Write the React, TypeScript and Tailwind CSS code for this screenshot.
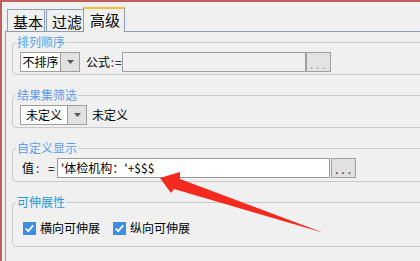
import React from "react";

function Group({
  title,
  color,
  className,
  children,
}: {
  title: string;
  color: string;
  className: string;
  children: React.ReactNode;
}) {
  return (
    <div className={`relative w-[420px] shrink-0 rounded-[4px] border border-[#c9c9c9] ${className}`}>
      <span className={`absolute left-[3px] -top-[8px] bg-[#f0f0f0] px-[1px] text-[12px] leading-[14px] ${color}`}>
        {title}
      </span>
      {children}
    </div>
  );
}

function Triangle() {
  return (
    <svg width="7" height="4" viewBox="0 0 7 4">
      <polygon points="0,0 7,0 3.5,4" fill="#555555" />
    </svg>
  );
}

function Check() {
  return (
    <div className="flex h-[13px] w-[13px] items-center justify-center bg-[#3c8ee5]">
      <svg width="13" height="13" viewBox="0 0 13 13">
        <polyline points="2.8,6.6 5.3,9.2 10.2,3.4" fill="none" stroke="#ffffff" strokeWidth="1.8" />
      </svg>
    </div>
  );
}

export default function App() {
  return (
    <div className="relative h-[261px] w-[420px] overflow-hidden border-l-2 border-t-2 border-[#c0605c] bg-[#f0f0f0] pl-[3px] pt-[5px] font-['Noto_Sans_CJK_SC',sans-serif] text-black">
      {/* tabs */}
      <div className="flex h-[24px] items-end pl-[2px]">
        <div className="h-[22px] w-[38px] border border-b-0 border-[#8c9db8] pl-[5px] pt-[3px] text-[15px] leading-[17px]">
          基本
        </div>
        <div className="ml-[1px] h-[22px] w-[37px] border-l border-t border-[#8c9db8] pl-[5px] pt-[3px] text-[15px] leading-[17px]">
          过滤
        </div>
        <div className="relative z-10 -mb-px h-[25px] w-[42px] border-x border-t-2 border-x-[#8c9db8] border-t-[#f2c03c] bg-[#f0f0f0] pl-[6px] pt-[2px] text-[15px] leading-[17px]">
          高级
        </div>
      </div>

      {/* panel */}
      <div className="flex h-[240px] w-[430px] flex-col gap-[20px] border-l border-t border-[#8c9db8] pl-[6px] pt-[10px]">
        <Group title="排列顺序" color="text-[#5c9cf0]" className="pb-[2px] pl-[7px] pt-[9px]">
          <div className="flex h-[20px] items-center text-[12px] leading-[14px]">
            <div className="flex h-[20px] border border-[#a0a0a0]">
              <div className="flex w-[39px] items-center justify-center bg-white">不排序</div>
              <div className="flex w-[19px] items-center justify-center border-l border-[#a0a0a0] bg-[#e1e1e1]">
                <Triangle />
              </div>
            </div>
            <span className="ml-[6px] inline-block w-[24px]">公式</span>
            <span className="inline-block w-[5px] text-center text-[#7a2040]">:</span>
            <span className="inline-block w-[7px]">=</span>
            <div className="h-[20px] w-[184px] border border-[#a0a0a0] bg-[#f0f0f0]"></div>
            <div className="flex h-[20px] w-[25px] items-center justify-center border border-[#a0a0a0] bg-[#e3e3e3] pl-[2px] pt-[3px] text-[12px] leading-[14px] tracking-[3px] text-[#c09a9a]">
              ...
            </div>
          </div>
        </Group>

        <Group title="结果集筛选" color="text-[#5c9cf0]" className="pb-[2px] pl-[7px] pt-[9px]">
          <div className="flex h-[20px] items-center text-[12px] leading-[14px]">
            <div className="flex h-[20px] border border-[#a0a0a0]">
              <div className="flex w-[46px] items-center justify-center bg-white">未定义</div>
              <div className="flex w-[19px] items-center justify-center border-l border-[#a0a0a0] bg-[#e1e1e1]">
                <Triangle />
              </div>
            </div>
            <span className="ml-[5px]">未定义</span>
          </div>
        </Group>

        <Group title="自定义显示" color="text-[#5c9cf0]" className="pb-[3px] pl-[9px] pt-[9px]">
          <div className="flex h-[20px] items-center text-[12px] leading-[14px]">
            <span className="inline-block w-[14px]">值</span>
            <span className="inline-block w-[4px] text-left text-[#7a2040]">:</span>
            <span className="ml-[8px] inline-block w-[7px]">=</span>
            <div className="ml-[2px] flex h-[20px] w-[273px] items-center border border-[#999999] bg-white pl-[3px]">
              '体检机构：'+$$$
            </div>
            <div className="ml-[1px] flex h-[20px] w-[25px] items-center justify-center border border-[#a0a0a0] bg-[#e1e1e1] pl-[2px] pt-[2px] text-[12px] leading-[14px] tracking-[3px] text-[#333333]">
              ...
            </div>
          </div>
        </Group>

        <Group title="可伸展性" color="text-[#1a9ad8]" className="pb-[8px] pl-[10px] pt-[15px]">
          <div className="flex h-[20px] items-center text-[12px] leading-[14px]">
            <Check />
            <span className="ml-[4px] inline-block w-[60px]">横向可伸展</span>
            <div className="ml-[13px]">
              <Check />
            </div>
            <span className="ml-[4px] inline-block w-[60px]">纵向可伸展</span>
          </div>
        </Group>
      </div>

      {/* red annotation arrow */}
      <svg
        className="pointer-events-none absolute left-[-2px] top-[-2px]"
        width="420"
        height="261"
        viewBox="0 0 420 261"
      >
        <polygon points="160,178 180,172 180,179 324,233 174,189 171,193" fill="#f42a1e" />
      </svg>
    </div>
  );
}
